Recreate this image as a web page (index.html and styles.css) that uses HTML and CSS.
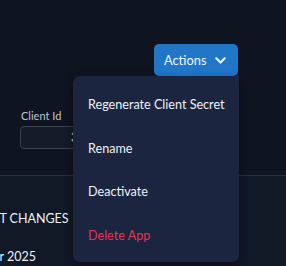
FILE: index.html
```html
<!DOCTYPE html>
<html lang="en">
<head>
    <meta charset="UTF-8">
    <meta name="viewport" content="width=device-width, initial-scale=1.0">
    <title>App Details</title>
    <link rel="stylesheet" href="styles.css">
</head>
<body>
    <div class="page">
        <div class="header">
            <div class="toolbar">
                <div class="dropdown">
                    <button class="actions-btn">
                        Actions
                        <svg class="chevron" width="11" height="7" viewBox="0 0 11 7">
                            <path d="M1.3 1.3 L5.5 5.5 L9.7 1.3" fill="none" stroke="currentColor" stroke-width="2.2" stroke-linecap="round" stroke-linejoin="round"/>
                        </svg>
                    </button>
                    <ul class="menu">
                        <li class="menu-item">Regenerate Client Secret</li>
                        <li class="menu-item">Rename</li>
                        <li class="menu-item">Deactivate</li>
                        <li class="menu-item danger">Delete App</li>
                    </ul>
                </div>
            </div>

            <div class="field">
                <label class="field-label">Client Id</label>
                <div class="field-input"><span class="field-value">3f8a2c91-7d4e</span></div>
            </div>
        </div>

        <div class="section">
            <h2 class="section-title">LATEST CHANGES</h2>
            <div class="change-date">Apr 2025</div>
        </div>
    </div>
</body>
</html>
```

FILE: styles.css
```css
body {
    margin: 0;
    font-family: Lato, "Noto Sans", sans-serif;
    background: #0f1421;
    color: #e6eaf0;
    overflow: hidden;
}
.page {
    width: 286px;
    height: 266px;
}
.header {
    height: 176px;
    box-sizing: border-box;
    padding-top: 44px;
    border-bottom: 1px solid #2a303c;
}
.toolbar {
    display: flex;
    justify-content: flex-end;
    padding-right: 48px;
}
.dropdown {
    position: relative;
}
.actions-btn {
    display: flex;
    align-items: center;
    gap: 9px;
    height: 32px;
    width: 84px;
    padding: 0 0 0 10px;
    border: none;
    border-radius: 5px;
    background: #2176c8;
    color: #f2f6fb;
    font-family: inherit;
    font-size: 12.8px;
}
.chevron {
    display: block;
    margin-top: 1px;
}
.menu {
    position: absolute;
    top: 32px;
    right: -1px;
    z-index: 2;
    width: 166px;
    margin: 0;
    padding: 7px 0 5px;
    list-style: none;
    background: #1b2540;
    border-radius: 7px 0 7px 7px;
    box-shadow: 0 4px 10px rgba(0, 0, 0, 0.45);
}
.menu-item {
    height: 43.6px;
    line-height: 43.6px;
    padding-left: 15px;
    font-size: 12.6px;
    color: #eef1f6;
    white-space: nowrap;
}
.menu-item.danger {
    color: #e6334f;
}
.field {
    margin-top: 33px;
    padding-left: 20px;
}
.field-label {
    display: block;
    margin-left: 1px;
    margin-bottom: 4px;
    font-size: 11px;
    color: #bcc4d0;
}
.field-input {
    width: 150px;
    height: 21px;
    border: 1px solid #3a404c;
    border-radius: 4px;
    background: #151b28;
    padding-left: 50px;
    line-height: 21px;
    font-size: 12.6px;
    overflow: hidden;
}
.field-value {
    color: #dfe5ee;
}
.section {
    background: #111826;
    height: 90px;
    padding-top: 35px;
    box-sizing: border-box;
}
.section-title {
    margin: 0 0 23px -36px;
    font-size: 12.5px;
    font-weight: normal;
    color: #eef1f6;
}
.change-date {
    margin-left: -16px;
    font-size: 12.5px;
    color: #eef1f6;
}
```
